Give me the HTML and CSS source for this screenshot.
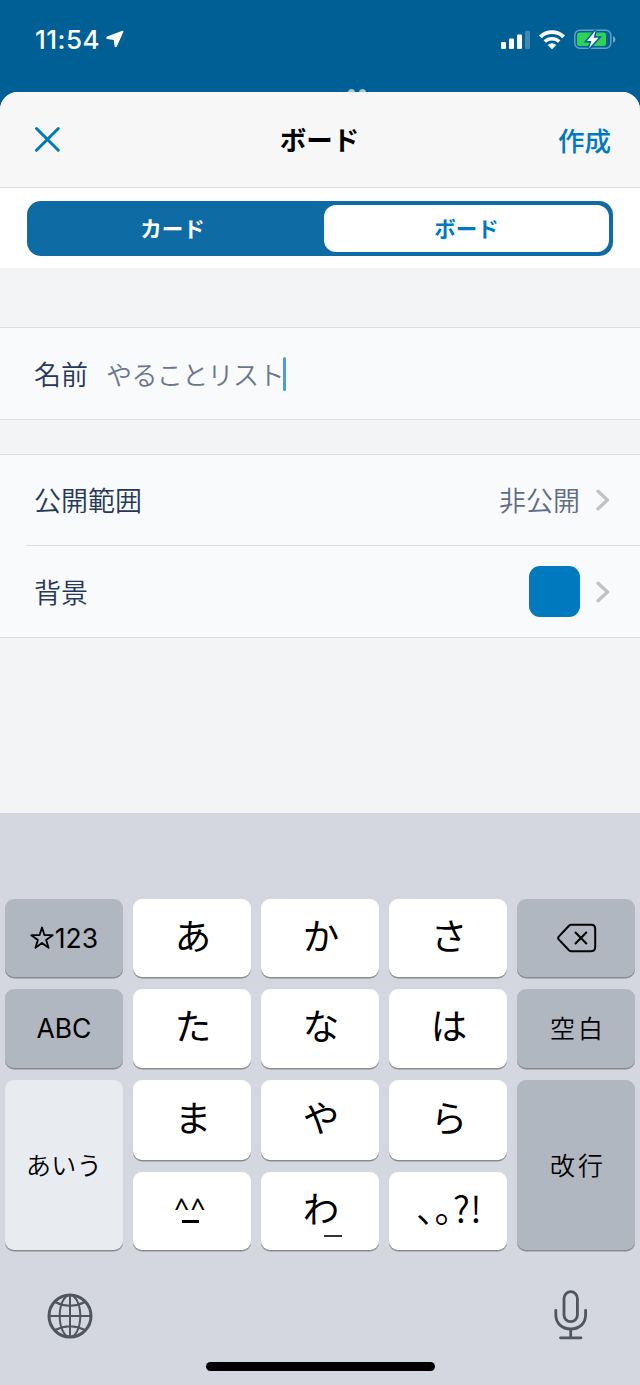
FILE: index.html
```html
<!DOCTYPE html>
<html lang="ja">
<head>
  <meta charset="UTF-8">
  <meta name="viewport" content="width=device-width, initial-scale=1.0">
  <title>ボード</title>
  <link rel="stylesheet" href="styles.css">
</head>
<body>
  <!-- ステータスバー -->
  <div class="status-bar">
    <div class="status-left">
      <span class="time">11:54</span>
      <svg width="18" height="18" viewBox="0 0 18 18"><path d="M16.4 .8 L1 6.4 Q-.4 8.3 1.2 9.1 L7.8 10 L8.6 16.4 Q9.6 18 10.8 16.4 L17.4 1.8 Q17.6 .4 16.4 .8Z" fill="#fff"/></svg>
    </div>
    <div class="status-right">
      <svg width="29" height="20" viewBox="0 0 29 20" fill="#fff">
        <rect x="0" y="12" width="5" height="7" rx="1.3"/>
        <rect x="8" y="8.5" width="5" height="10.5" rx="1.3"/>
        <rect x="16" y="4.5" width="5" height="14.5" rx="1.3"/>
        <rect x="24" y=".7" width="5" height="18.3" rx="1.3" opacity=".25"/>
      </svg>
      <svg class="wifi" width="26" height="20" viewBox="0 0 26 20">
        <path d="M1.4 6.9 A16.6 16.6 0 0 1 24.6 6.9" fill="none" stroke="#fff" stroke-width="3.8"/>
        <path d="M5.8 11.6 A10.4 10.4 0 0 1 20.2 11.6" fill="none" stroke="#fff" stroke-width="3.5"/>
        <path d="M13 19.3 L8.7 15 Q13 11.4 17.3 15Z" fill="#fff"/>
      </svg>
      <svg class="battery" width="42" height="22" viewBox="0 0 42 22">
        <rect x=".8" y="1.3" width="36" height="18" rx="5" fill="none" stroke="#fff" stroke-opacity=".4" stroke-width="1.5"/>
        <path d="M39 7.3 Q41.4 7.8 41.4 10.4 Q41.4 13 39 13.5Z" fill="#fff" fill-opacity=".45"/>
        <rect x="3" y="3.5" width="29" height="13.6" rx="2.7" fill="#30d158"/>
        <path d="M21.6 1.6 L13 11.9 H17.4 L15 19.2 L24.6 8.7 H19.6Z" fill="#fff" stroke="#006096" stroke-width="3" paint-order="stroke"/>
      </svg>
    </div>
    <div class="behind"><i></i><i></i></div>
  </div>

  <div class="sheet">
    <div class="nav">
      <svg width="27" height="27" viewBox="0 0 27 27"><path d="M2.5 2.5 L24.3 24.3 M24.3 2.5 L2.5 24.3" stroke="#0079bf" stroke-width="3" stroke-linecap="round"/></svg>
      <h1>ボード</h1>
      <span class="create">作成</span>
    </div>

    <div class="tabs">
      <div class="segment">
        <div class="tab">カード</div>
        <div class="tab active">ボード</div>
      </div>
    </div>

    <div class="group name-group">
      <div class="row">
        <span>名前</span>
        <span class="placeholder">やることリスト</span>
        <i class="caret"></i>
      </div>
    </div>

    <div class="group">
      <div class="row first">
        <span>公開範囲</span>
        <span class="value">非公開</span>
        <svg class="chevron" width="14" height="22" viewBox="0 0 14 22"><path d="M2 2.3 L11.5 11 L2 19.8" /></svg>
      </div>
      <div class="row line">
        <span>背景</span>
        <span class="swatch"></span>
        <svg class="chevron" width="14" height="22" viewBox="0 0 14 22"><path d="M2 2.3 L11.5 11 L2 19.8" /></svg>
      </div>
    </div>
  </div>

  <!-- キーボード -->
  <div class="keyboard">
    <div class="keys">
      <div class="key dark latin">
        <svg width="24" height="24" viewBox="0 0 24 24"><path d="M12 1.5 L14.5 9.2 H22.7 L16.1 14 L18.6 21.8 L12 17 L5.4 21.8 L7.9 14 L1.3 9.2 H9.5Z" fill="none" stroke="#000" stroke-width="1.8" stroke-linejoin="round"/></svg>123
      </div>
      <div class="key">あ</div>
      <div class="key">か</div>
      <div class="key">さ</div>
      <div class="key dark delete">
        <svg width="40" height="30" viewBox="0 0 40 30" fill="none" stroke="#000" stroke-width="2" stroke-linecap="round" stroke-linejoin="round">
          <path d="M14.5 1.7 H34 Q38.2 1.7 38.2 5.9 V24 Q38.2 28.2 34 28.2 H14.5 Q13 28.2 12 27.2 L1.7 16.4 Q.6 15 1.7 13.6 L12 2.7 Q13 1.7 14.5 1.7Z"/>
          <path d="M18.5 9.5 L29.3 20.5 M29.3 9.5 L18.5 20.5"/>
        </svg>
      </div>

      <div class="key dark latin">ABC</div>
      <div class="key">た</div>
      <div class="key">な</div>
      <div class="key">は</div>
      <div class="key dark small">空白</div>

      <div class="key light small kana">あいう</div>
      <div class="key">ま</div>
      <div class="key">や</div>
      <div class="key">ら</div>
      <div class="key dark small tall">改行</div>

      <div class="key face"><span>^^</span><i></i></div>
      <div class="key wa">わ<i></i></div>
      <div class="key punct">、。?!</div>
    </div>

    <div class="bottom">
      <svg width="46" height="46" viewBox="0 0 46 46" fill="none" stroke="#50555f" stroke-width="2">
        <circle cx="23" cy="23" r="21" stroke-width="3"/>
        <ellipse cx="23" cy="23" rx="10.3" ry="21"/>
        <path d="M23 2 V44 M2 23 H44 M8 9 Q23 16.5 38 9 M8 37 Q23 29.5 38 37"/>
      </svg>
      <svg width="34" height="50" viewBox="0 0 34 50" fill="none" stroke="#50555f" stroke-width="2.8" stroke-linecap="round">
        <rect x="10" y="1.7" width="13.4" height="30" rx="6.7"/>
        <path d="M1.8 20.3 V24.5 C1.8 33.5 8 39 16.7 39 S31.6 33.5 31.6 24.5 V20.3 M16.7 39 V47.8 M6.5 47.8 H27"/>
      </svg>
    </div>
    <div class="home"></div>
  </div>
</body>
</html>
```
FILE: styles.css
```css
* {
  margin: 0;
  padding: 0;
  box-sizing: border-box;
}
body {
  width: 640px;
  height: 1385px;
  overflow: hidden;
  background: #006096;
  font-family: Inter, "Noto Sans CJK JP", sans-serif;
  display: flex;
  flex-direction: column;
}
svg {
  display: block;
  flex-shrink: 0;
}

/* status bar */
.status-bar {
  position: relative;
  height: 92px;
  flex-shrink: 0;
  padding: 24px 24px 0 35px;
  display: flex;
  justify-content: space-between;
  color: #fff;
}
.status-left, .status-right {
  display: flex;
  align-items: center;
  height: 31px;
}
.status-left {
  height: 30px;
}
.time {
  width: 71px;
  font-size: 26px;
  font-weight: 550;
  letter-spacing: .5px;
}
.wifi {
  margin-left: 9px;
}
.battery {
  margin-left: 9px;
}
.behind {
  position: absolute;
  left: 348px;
  top: 89px;
  display: flex;
  gap: 4px;
}
.behind i {
  width: 7px;
  height: 7px;
  border-radius: 50%;
  background: #a9bfcd;
}

/* sheet */
.sheet {
  position: relative;
  height: 721px;
  flex-shrink: 0;
  background: #f3f4f6;
  border-radius: 18px 18px 0 0;
  overflow: hidden;
}
.nav {
  height: 96px;
  padding: 0 29px 0 34px;
  background: #f7f7f7;
  border-bottom: 1px solid #dadadb;
  display: grid;
  grid-template-columns: 1fr auto 1fr;
  align-items: center;
}
.nav h1 {
  padding: 0 6px 2px 0;
  font-size: 26.5px;
  font-weight: 600;
}
.create {
  justify-self: end;
  padding-bottom: 1px;
  color: #0079bf;
  font-size: 26.5px;
  font-weight: 500;
}
.tabs {
  height: 80px;
  padding: 13px 27px;
  background: #fff;
}
.segment {
  height: 55px;
  padding: 4px;
  background: #0e6ba3;
  border-radius: 14px;
  display: flex;
}
.tab {
  width: 293px;
  padding: 0 10px 2px 0;
  display: flex;
  align-items: center;
  justify-content: center;
  color: #fff;
  font-size: 21.5px;
  font-weight: 600;
}
.tab.active {
  width: 285px;
  padding: 0 0 2px;
  background: #fff;
  border-radius: 12px;
  color: #0079bf;
}
.group {
  margin-top: 34px;
  background: #f9fafc;
  border-top: 1px solid #dcdde0;
  border-bottom: 1px solid #dcdde0;
}
.name-group {
  margin-top: 59px;
}
.row {
  height: 91px;
  padding: 0 30px 0 34px;
  display: flex;
  align-items: center;
  color: #253858;
  font-size: 27px;
  font-weight: 350;
}
.row span {
  padding-bottom: 1px;
}
.row.first {
  height: 90px;
}
.row.line {
  height: 92px;
  margin-left: 26px;
  padding-left: 8px;
  border-top: 1px solid #dcdde0;
}
.placeholder {
  margin-left: 18px;
  color: #6b778c;
  font-size: 26px;
  letter-spacing: -.6px;
}
.caret {
  width: 3px;
  height: 34px;
  margin-left: -1px;
  border-radius: 2px;
  background: #4c9fd2;
}
.value {
  margin-left: auto;
  color: #5e6c84;
}
.swatch {
  width: 51px;
  height: 51px;
  margin-left: auto;
  border-radius: 11px;
  background: #0079bf;
}
.chevron {
  margin-left: 16px;
  fill: none;
  stroke: #c1c2c5;
  stroke-width: 3.3;
  stroke-linecap: round;
  stroke-linejoin: round;
}

/* keyboard */
.keyboard {
  height: 572px;
  flex-shrink: 0;
  padding: 86px 5px 0;
  background: #d4d7df;
}
.keys {
  display: grid;
  grid-template-columns: repeat(5, 118px);
  grid-template-rows: 78px 79px 80px 78px;
  gap: 12px 10px;
}
.key {
  background: #fff;
  border-radius: 9px;
  box-shadow: 0 1.5px 0 #898b8f;
  display: flex;
  align-items: center;
  justify-content: center;
  padding: 0 0 2px 2px;
  font-size: 36.5px;
  font-weight: 400;
  line-height: 1;
}
.key.dark {
  background: #b0b7c1;
  padding: 0;
}
.key.light {
  background: #e8ebf0;
  grid-row: 3 / 5;
}
.key.latin {
  font-size: 26.5px;
}
.key.latin svg {
  margin-right: 1px;
}
.key.delete {
  padding-left: 1px;
}
.key.small {
  padding: 2px 0 0 4px;
  font-size: 25px;
  font-weight: 350;
  letter-spacing: 3px;
}
.key.small.kana {
  padding: 2px 0 0;
  letter-spacing: .3px;
}
.key.tall {
  grid-row: 3 / 5;
  grid-column: 5;
}
.key.face {
  flex-direction: column;
  padding: 0 3px 5px 0;
  font-family: "Noto Sans", sans-serif;
  font-size: 26px;
  font-weight: 500;
  letter-spacing: 1.5px;
}
.face span {
  height: 26px;
}
.face i {
  width: 17px;
  height: 3px;
  background: #000;
}
.wa {
  position: relative;
}
.wa i {
  position: absolute;
  left: 63px;
  top: 63px;
  width: 18px;
  height: 2px;
  background: #333;
}
.key.punct {
  padding: 0 0 8px 2px;
  font-family: "Noto Sans CJK JP", sans-serif;
  font-feature-settings: "halt";
  font-size: 36px;
  font-weight: 350;
  letter-spacing: .5px;
}
.bottom {
  height: 108px;
  padding: 40px 47px 0 42px;
  display: flex;
  justify-content: space-between;
}
.bottom svg:first-child {
  margin-top: 3px;
}
.home {
  width: 229px;
  height: 9px;
  margin: 4px auto 0;
  border-radius: 5px;
  background: #000;
}
```
